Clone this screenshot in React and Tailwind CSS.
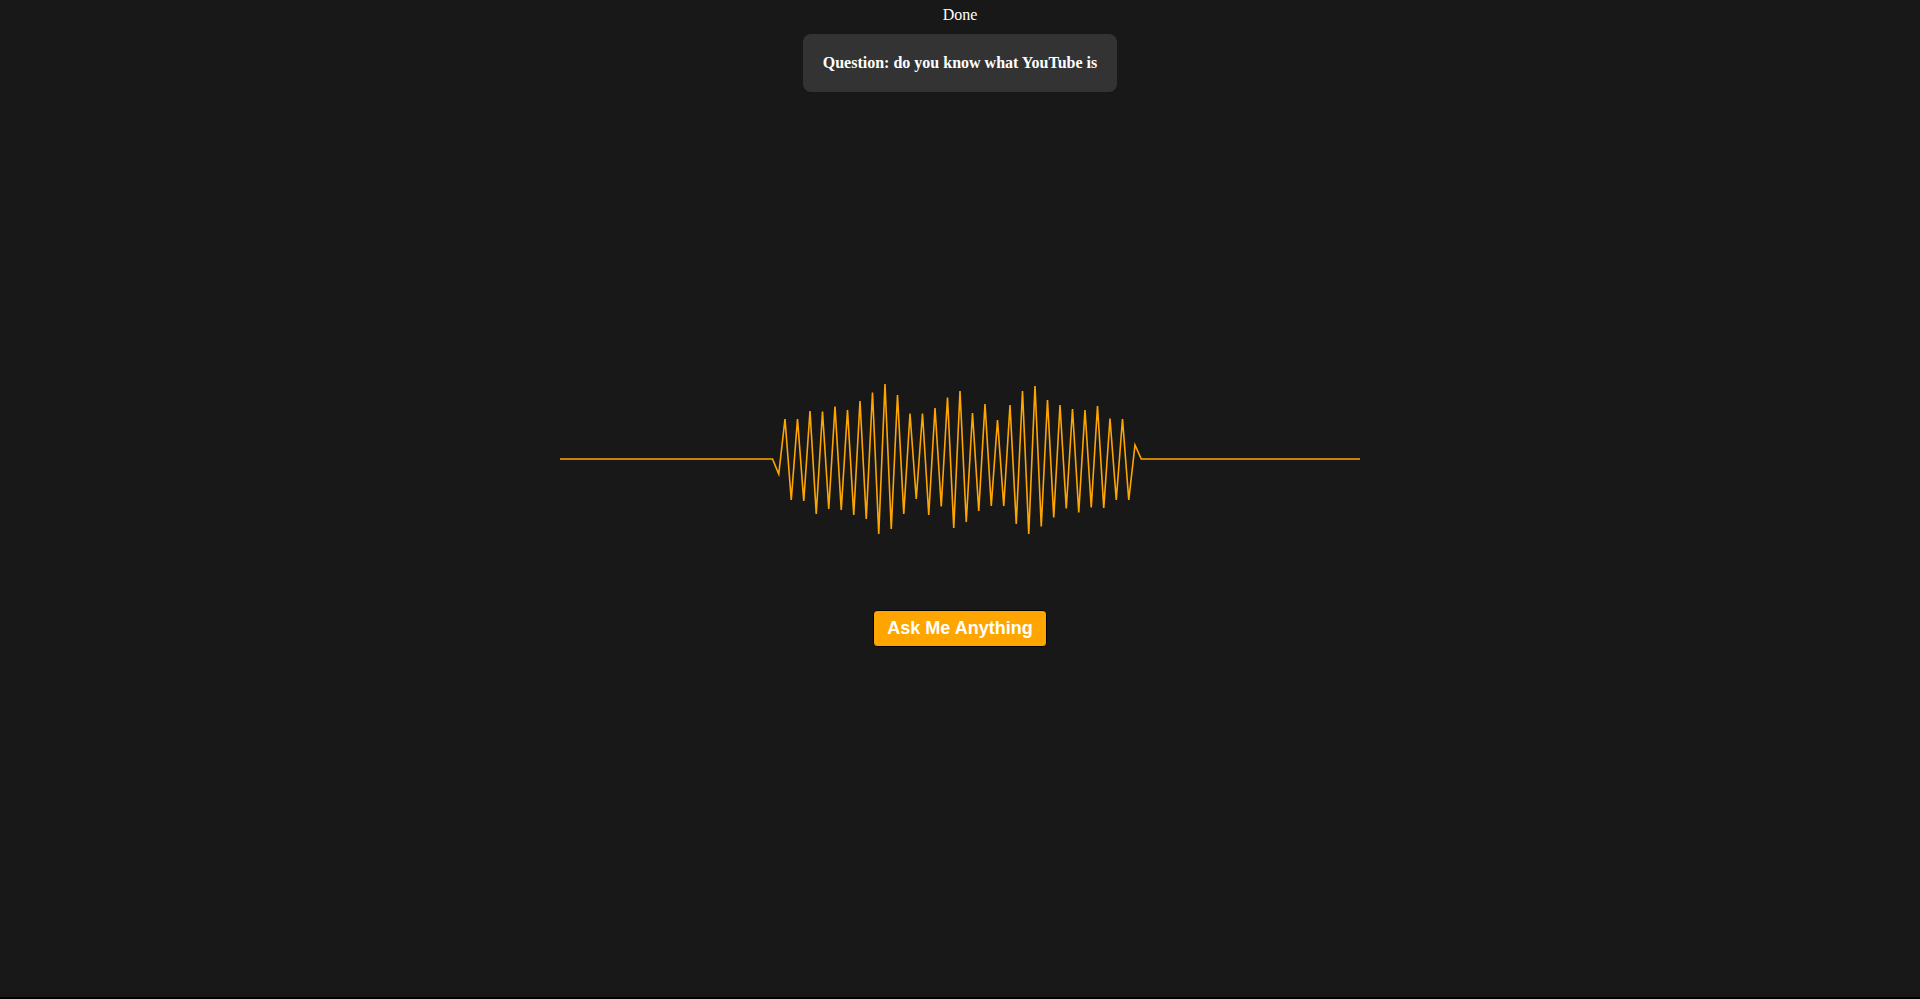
import React from "react";

const W = 800;
const H = 300;
const OFFY = 308;
const base = 458;
// measured y (page coords) for samples 34..93
const ys = {
  34: 458, 35: 473, 36: 418, 37: 499, 38: 418, 39: 500, 40: 410, 41: 513, 42: 410.5,
  43: 508, 44: 405.5, 45: 509, 46: 409, 47: 514, 48: 400, 49: 518, 50: 391.5, 51: 533,
  52: 383, 53: 528, 54: 394, 55: 513, 56: 412.5, 57: 498, 58: 412.5, 59: 514, 60: 407,
  61: 505.5, 62: 396.5, 63: 527, 64: 390, 65: 521, 66: 412, 67: 510, 68: 403, 69: 505,
  70: 419, 71: 505, 72: 404, 73: 523, 74: 390, 75: 533, 76: 385, 77: 525.5, 78: 399,
  79: 516.5, 80: 404, 81: 507.5, 82: 408, 83: 511.5, 84: 409, 85: 506.5, 86: 405,
  87: 507, 88: 417.5, 89: 499, 90: 418, 91: 499, 92: 444, 93: 458,
};

function buildPoints() {
  const pts = [];
  for (let i = 0; i <= 128; i++) {
    const x = i * 6.25;
    const y = (ys[i] !== undefined ? ys[i] : base) - OFFY;
    pts.push(`${x},${y}`);
  }
  return pts.join(" ");
}

export default function App() {
  const points = buildPoints();
  return (
    <div className="h-[999px] w-full bg-black overflow-hidden">
      <div className="h-[997px] w-full bg-[#181818] flex flex-col items-center pt-[6px]">
        <div
          className="text-white text-[16px] leading-[18px]"
          style={{ fontFamily: '"Liberation Serif", serif' }}
        >
          Done
        </div>
        <div
          className="mt-[10px] rounded-[8px] bg-[#333333] px-5 py-5 text-white text-[16px] leading-[18px] font-bold"
          style={{ fontFamily: '"Liberation Serif", serif' }}
        >
          Question: do you know what YouTube is
        </div>
        <svg
          className="mt-[217px] block"
          width={W}
          height={H}
          viewBox={`0 0 ${W} ${H}`}
        >
          <polyline
            points={points}
            fill="none"
            stroke="#FFA500"
            strokeWidth="1.6"
            strokeLinejoin="miter"
          />
        </svg>
        <button
          className="mt-px rounded-[4px] border border-black bg-[#FFA500] px-[13px] py-[7px] text-white text-[18px] leading-[21px] font-bold"
          style={{ fontFamily: '"Liberation Sans", Arial, sans-serif' }}
        >
          Ask Me Anything
        </button>
      </div>
    </div>
  );
}
